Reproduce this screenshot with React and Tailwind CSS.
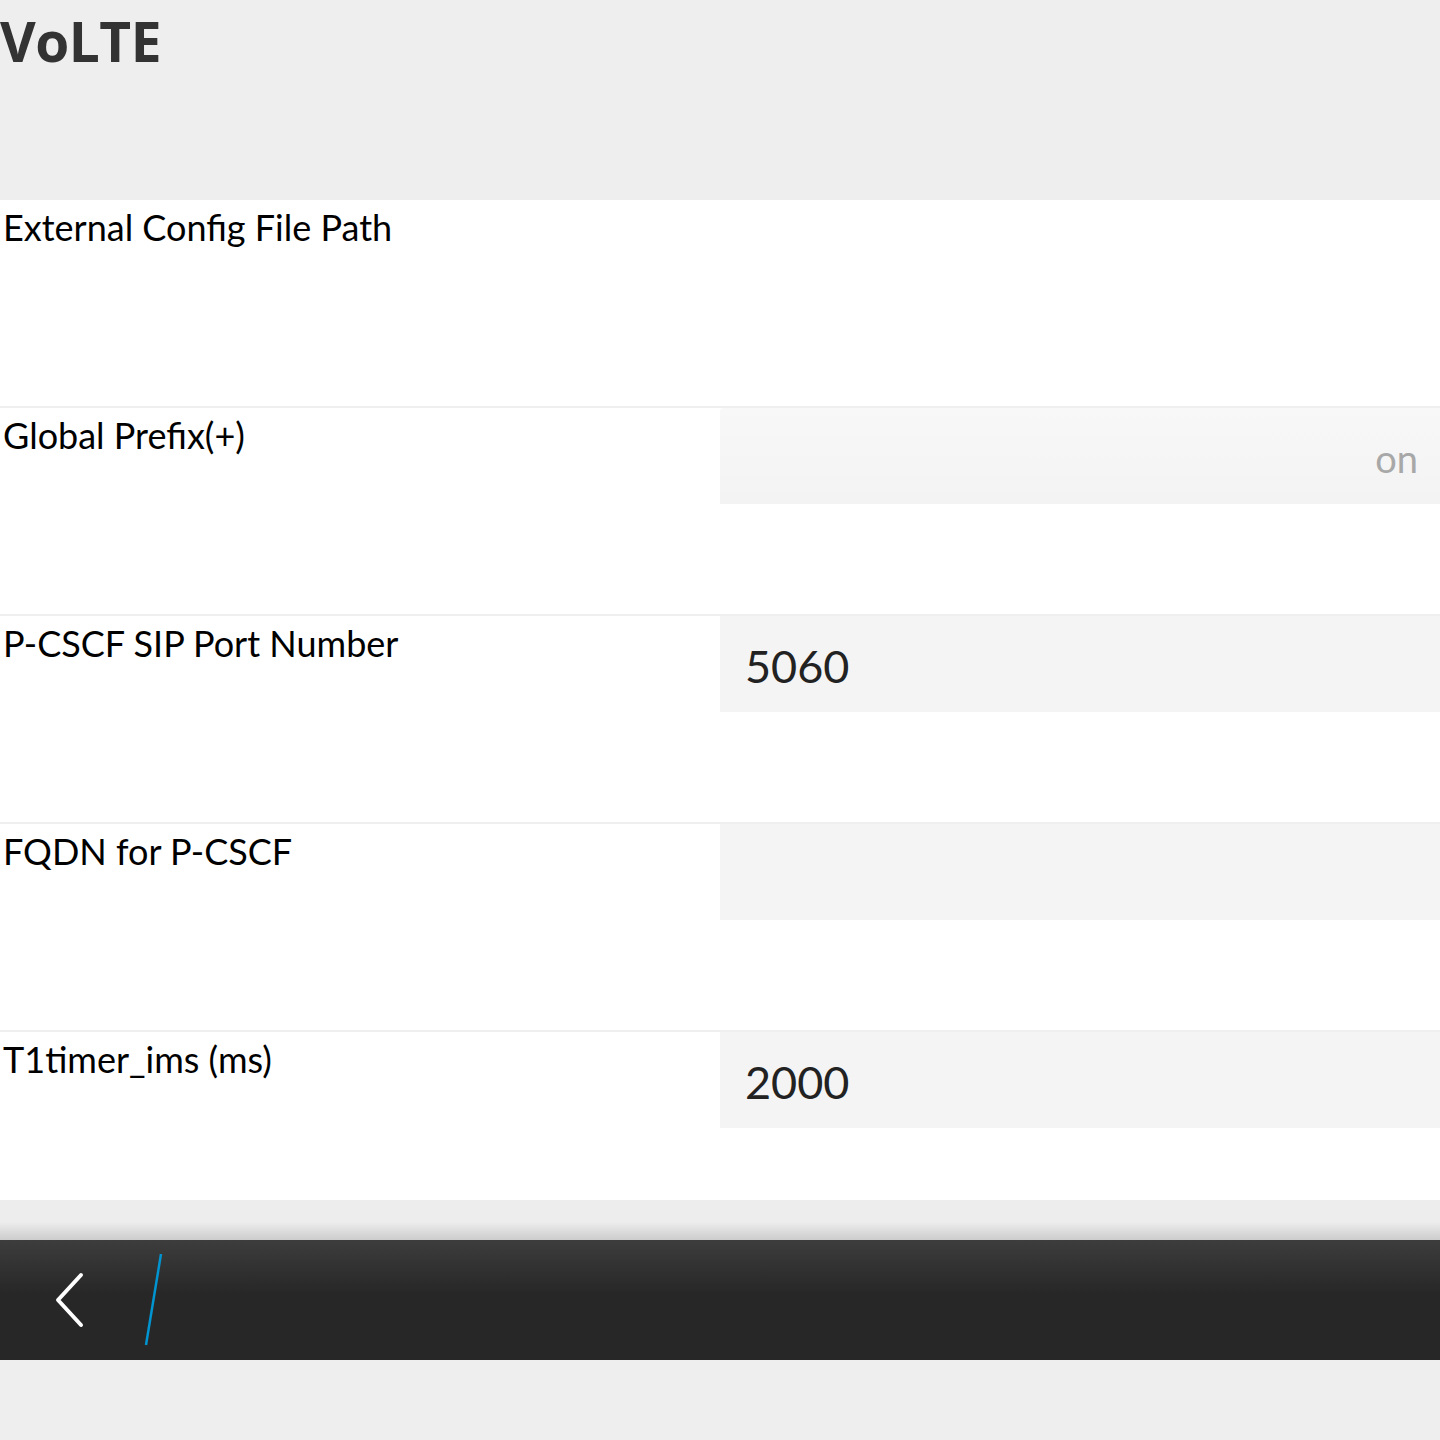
import React from 'react';

const ROWS = [
  { label: 'External Config File Path', field: null },
  { label: 'Global Prefix(+)', field: { kind: 'toggle', value: 'on' } },
  { label: 'P-CSCF SIP Port Number', field: { kind: 'text', value: '5060' } },
  { label: 'FQDN for P-CSCF', field: { kind: 'text', value: '' } },
  { label: 'T1timer_ims (ms)', field: { kind: 'text', value: '2000' }, last: true },
];

function Field({ field }) {
  if (!field) return null;
  if (field.kind === 'toggle') {
    return (
      <div className="w-[720px] h-[96px] rounded-tl-[4px] bg-gradient-to-b from-[#f8f8f8] to-[#f3f3f3] flex items-center justify-end pr-[22px]">
        <span className="text-[38px] text-[#a8a8a8] mt-[4px]">{field.value}</span>
      </div>
    );
  }
  return (
    <div className="w-[720px] h-[96px] bg-[#f4f4f4] flex items-center pl-[25px]">
      <span className="text-[45px] text-[#222] mt-[6px]">{field.value}</span>
    </div>
  );
}

export default function App() {
  return (
    <div className="w-[1440px] h-[1440px] bg-[#eeeeee] flex flex-col" style={{ fontFamily: 'Lato, "Open Sans", sans-serif' }}>
      <div className="h-[200px] shrink-0">
        <h1 className="text-[55px] leading-none font-bold text-[#333] pt-[13px] tracking-[-0.5px]" style={{ fontFamily: '"Open Sans", Lato, sans-serif' }}>
          VoLTE
        </h1>
      </div>

      <div className="bg-white flex flex-col">
        {ROWS.map((row, i) => (
          <div
            key={row.label}
            className={`flex justify-between ${i > 0 ? 'border-t-2 border-[#efefef]' : ''} ${row.last ? 'h-[170px]' : i > 0 ? 'h-[208px]' : 'h-[206px]'}`}
          >
            <div className="text-[36px] text-black leading-none pl-[3px] pt-[9px] whitespace-pre">{row.label}</div>
            <Field field={row.field} />
          </div>
        ))}
      </div>

      <div className="h-[40px] shrink-0 bg-gradient-to-b from-[#ededed] from-[55%] to-[#cccccc]" />

      <div className="h-[120px] shrink-0 bg-gradient-to-b from-[#3d3d3d] to-[#272727] to-[45%] flex items-center">
        <svg width="40" height="60" viewBox="0 0 40 60" className="ml-[50px]">
          <path d="M31 5 L8 30 L31 55" stroke="white" strokeWidth="4" fill="none" strokeLinecap="round" strokeLinejoin="round" />
        </svg>
        <svg width="30" height="100" viewBox="0 0 30 100" className="ml-[48px]">
          <line x1="23" y1="4" x2="8" y2="95" stroke="#0094d0" strokeWidth="2.5" />
        </svg>
      </div>
    </div>
  );
}
